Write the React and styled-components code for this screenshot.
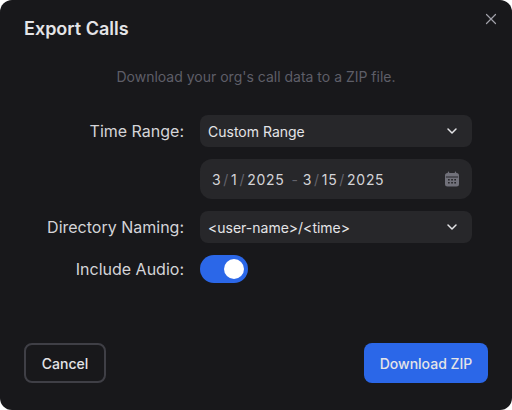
import React from "react";
import styled, { createGlobalStyle } from "styled-components";

const Global = createGlobalStyle`
  html, body { margin: 0; padding: 0; background: #ffffff; }
  body { font-family: Inter, "Noto Sans", sans-serif; }
`;

const Modal = styled.div`
  position: relative;
  box-sizing: border-box;
  width: 512px;
  height: 410px;
  background: #18181b;
  border-radius: 12px;
  display: flex;
  flex-direction: column;
  padding: 0 24px 27px;
  font-family: Inter, "Noto Sans", sans-serif;
`;

const Close = styled.button`
  position: absolute;
  top: 11px;
  right: 13px;
  width: 16px;
  height: 16px;
  padding: 0;
  border: 0;
  background: none;
  color: #a1a1aa;
  display: flex;
  align-items: center;
  justify-content: center;
`;

const Title = styled.h2`
  margin: 0;
  padding-top: 16px;
  height: 26px;
  font-size: 18px;
  line-height: 26px;
  font-weight: 600;
  color: #e4e4e7;
`;

const Description = styled.p`
  margin: 25px 0 0;
  height: 20px;
  font-size: 14px;
  line-height: 20px;
  font-weight: 400;
  color: #5e5e68;
  text-align: center;
`;

const Form = styled.div`
  margin-top: 28px;
  display: grid;
  grid-template-columns: 160px 272px;
  column-gap: 16px;
  row-gap: 12px;
  align-items: center;
`;

const Label = styled.label`
  font-size: 16px;
  line-height: 24px;
  color: #d4d4d8;
  text-align: right;
`;

const Select = styled.div`
  box-sizing: border-box;
  grid-column: 2;
  height: 32px;
  border-radius: 8px;
  background: #27272a;
  padding: 0 14px 0 8px;
  display: flex;
  align-items: center;
  justify-content: space-between;
  font-size: 14px;
  color: #e4e4e7;
`;

const DateField = styled.div`
  box-sizing: border-box;
  grid-column: 2;
  height: 40px;
  border-radius: 12px;
  background: #27272a;
  padding: 0 12px;
  display: flex;
  align-items: center;
  justify-content: space-between;
  font-size: 14px;
  color: #d4d4d8;
`;

const DateText = styled.div`
  display: flex;
  align-items: center;
  letter-spacing: 0.7px;
`;

const Slash = styled.span`
  color: #63636c;
  margin: 0 2px;
`;

const Dash = styled.span`
  color: #63636c;
  margin: 0 4px 0 7px;
`;

const Toggle = styled.div`
  box-sizing: border-box;
  width: 48px;
  height: 28px;
  border-radius: 14px;
  background: #2b67e8;
  padding: 4px;
  display: flex;
  justify-content: flex-end;
`;

const Knob = styled.span`
  width: 20px;
  height: 20px;
  border-radius: 50%;
  background: #ffffff;
`;

const Footer = styled.div`
  margin-top: auto;
  display: flex;
  justify-content: space-between;
`;

const Outline = styled.button`
  box-sizing: border-box;
  width: 82px;
  height: 40px;
  border-radius: 8px;
  border: 2px solid #3f3f46;
  background: transparent;
  color: #e4e4e7;
  font: 500 14px Inter, sans-serif;
`;

const Primary = styled.button`
  box-sizing: border-box;
  width: 124px;
  height: 40px;
  border-radius: 8px;
  border: 0;
  background: #2b67e8;
  color: #e4e4e7;
  font: 500 14px Inter, sans-serif;
`;

const Chevron = () => (
  <svg width="12" height="12" viewBox="0 0 12 12" fill="none" stroke="#e4e4e7" strokeWidth="1.5" strokeLinecap="round" strokeLinejoin="round">
    <path d="M2 4l4 4 4-4" />
  </svg>
);

const CalendarIcon = () => (
  <svg width="16" height="16" viewBox="0 0 16 16" fill="#71717a">
    <path fillRule="evenodd" d="M4.5 0.5a.7.7 0 0 1 .7.7V2h5.6v-.8a.7.7 0 0 1 1.4 0V2h.3A2.5 2.5 0 0 1 15 4.5v8.5a2.5 2.5 0 0 1-2.5 2.5h-9A2.5 2.5 0 0 1 1 13V4.5A2.5 2.5 0 0 1 3.5 2h.3v-.8a.7.7 0 0 1 .7-.7zM1.9 5.6v.8h12.2v-.8zM4 8v1.5h1.7V8zm3.2 0v1.5h1.7V8zm3.1 0v1.5H12V8zM4 11v1.5h1.7V11zm3.2 0v1.5h1.7V11zm3.1 0v1.5H12V11z" />
  </svg>
);

const CloseIcon = () => (
  <svg width="16" height="16" viewBox="0 0 16 16" fill="none" stroke="currentColor" strokeWidth="1.2" strokeLinecap="round">
    <path d="M3.5 3.5l9 9M12.5 3.5l-9 9" />
  </svg>
);

export default function App() {
  return (
    <>
      <Global />
      <Modal>
        <Close aria-label="Close"><CloseIcon /></Close>
        <Title>Export Calls</Title>
        <Description>Download your org's call data to a ZIP file.</Description>
        <Form>
          <Label>Time Range:</Label>
          <Select>Custom Range<Chevron /></Select>
          <DateField>
            <DateText>
              3<Slash>/</Slash>1<Slash>/</Slash>2025<Dash>-</Dash>3<Slash>/</Slash>15<Slash>/</Slash>2025
            </DateText>
            <CalendarIcon />
          </DateField>
          <Label>Directory Naming:</Label>
          <Select>{"<user-name>/<time>"}<Chevron /></Select>
          <Label>Include Audio:</Label>
          <Toggle><Knob /></Toggle>
        </Form>
        <Footer>
          <Outline>Cancel</Outline>
          <Primary>Download ZIP</Primary>
        </Footer>
      </Modal>
    </>
  );
}
